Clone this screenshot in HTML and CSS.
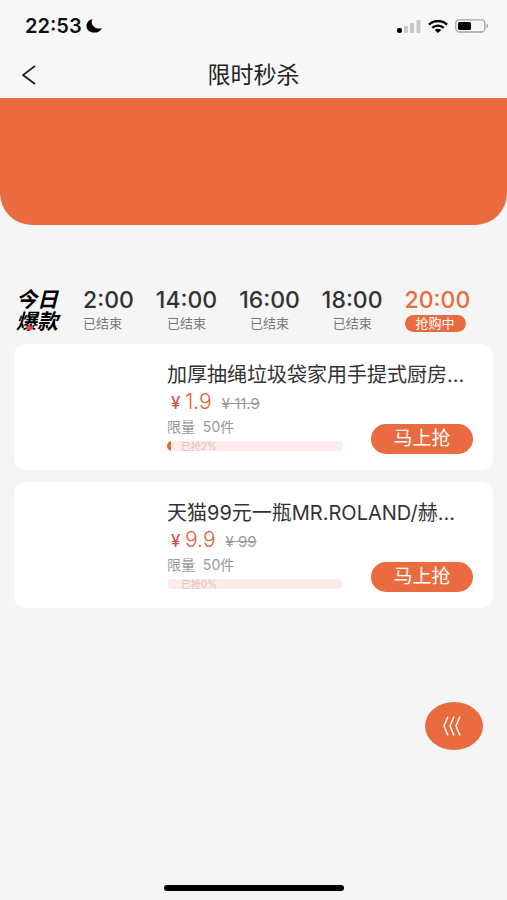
FILE: index.html
```html
<!DOCTYPE html>
<html lang="zh-CN">
<head>
<meta charset="utf-8">
<meta name="viewport" content="width=device-width, initial-scale=1">
<title>限时秒杀</title>
<link rel="stylesheet" href="styles.css">
</head>
<body>
<header class="top">
  <div class="status">
    <span class="clock">22:53</span>
    <svg class="moon" width="17" height="14" viewBox="0 0 17 14"><path d="M6.200.3C2.700 1 .5 3.900.5 7c0 3.900 3.300 6.600 7.500 6.600 3.600 0 6.700-1.700 8-4.700-1.400.6-3 .8-4.500.5C7.300 8.700 4.600 4.800 6.200.3Z"/></svg>
    <div class="signals">
      <svg width="24" height="13" viewBox="0 0 24 13"><rect x="0" y="8" width="5" height="5" rx="2"/><g fill="#c9c9c9"><rect x="7" y="6" width="4" height="7" rx="1"/><rect x="13" y="3" width="4" height="10" rx="1"/><rect x="19.500" y="0" width="4" height="13" rx="1"/></g></svg>
      <svg width="20" height="13" viewBox="0 0 20 13"><g fill="none" stroke="#000" stroke-width="2.400"><path d="M1 4.600C6-.2 14-.2 19 4.600"/><path d="M4.300 7.900c3.200-3.100 8.200-3.100 11.400 0"/></g><path d="M6.700 9.900c1.900-1.700 4.700-1.700 6.600 0L10 13Z"/></svg>
      <svg width="34" height="14" viewBox="0 0 34 14"><rect x=".8" y=".8" width="29" height="12.200" rx="3.500" fill="none" stroke="#a5a5a5" stroke-width="1.300"/><rect x="3" y="3" width="13" height="8" rx="1.500"/><path d="M31.500 4.500c2 .6 2 4.200 0 4.800Z" fill="#a5a5a5"/></svg>
    </div>
  </div>
  <nav class="nav">
    <button class="back" type="button" aria-label="返回"><svg width="14" height="20" viewBox="0 0 14 20"><path d="M13 1 1 10l12 9" fill="none" stroke="#222" stroke-width="1.800"/></svg></button>
    <h1>限时秒杀</h1>
  </nav>
</header>
<main>
  <div class="banner"></div>
  <section class="sessions">
    <div class="hot"><div>今日</div><div>爆款</div><svg class="flame" width="9" height="6" viewBox="0 0 10 7"><path d="M1 2 3 3 5 0l2 3 2-1c1 3-1 5-4 5S0 5 1 2Z" fill="#e94343"/></svg></div>
    <button class="session start" type="button"><b>2:00</b><span>已结束</span></button>
    <button class="session" type="button"><b>14:00</b><span>已结束</span></button>
    <button class="session" type="button"><b>16:00</b><span>已结束</span></button>
    <button class="session" type="button"><b>18:00</b><span>已结束</span></button>
    <button class="session start active" type="button"><b>20:00</b><span>抢购中</span></button>
  </section>
  <section class="list">
    <article class="card">
      <h2>加厚抽绳垃圾袋家用手提式厨房…</h2>
      <p class="price"><i>¥</i><strong>1.9</strong><del>¥ 11.9</del></p>
      <div class="buy">
        <div class="stock">
          <p>限量&nbsp; 50件</p>
          <div class="bar"><div class="fill" style="width:2%"></div><span>已抢2%</span></div>
        </div>
        <button class="grab" type="button">马上抢</button>
      </div>
    </article>
    <article class="card">
      <h2>天猫99元一瓶MR.ROLAND/赫…</h2>
      <p class="price"><i>¥</i><strong>9.9</strong><del>¥ 99</del></p>
      <div class="buy">
        <div class="stock">
          <p>限量&nbsp; 50件</p>
          <div class="bar"><div class="fill" style="width:0%"></div><span>已抢0%</span></div>
        </div>
        <button class="grab" type="button">马上抢</button>
      </div>
    </article>
  </section>
</main>
<button class="float" type="button" aria-label="展开"><svg width="18" height="20" viewBox="0 0 18 20"><path d="M5 .5 1 10l4 9.500M11 .5 7 10l4 9.500M17 .5 13 10l4 9.500" fill="none" stroke="#fff" stroke-width="1.400"/></svg></button>
<div class="home"></div>
</body>
</html>
```

FILE: styles.css
```css
* { box-sizing: border-box; }
body {
  margin: 0;
  min-height: 100vh;
  background: #f5f5f5;
  color: #333;
  font-family: Inter, "Noto Sans CJK SC", sans-serif;
}
h1, h2, p { margin: 0; font-weight: 400; }
button { border: 0; padding: 0; background: none; color: inherit; font: inherit; }
svg { display: block; }

.top { background: #f7f7f7; }
.status { display: flex; align-items: center; height: 52px; padding: 0 18px 0 25px; }
.clock { color: #111; font-size: 20px; font-weight: 600; }
.moon { margin-left: 4px; }
.signals { display: flex; align-items: center; gap: 7px; margin-left: auto; }
.nav { display: grid; grid-template-columns: 60px 1fr 60px; align-items: center; height: 46px; }
.back { padding: 4px 22px; }
.nav h1 { color: #222; font-size: 23px; line-height: 32px; text-align: center; }
.banner { height: 127px; background: #eb6b40; border-radius: 0 0 32px 32px; }

.sessions { display: flex; align-items: flex-start; gap: 22px; padding: 62px 16px 0; }
.hot {
  position: relative;
  width: 45px;
  color: #000;
  font-family: "Noto Sans CJK SC", sans-serif;
  font-size: 21px;
  font-style: italic;
  font-weight: 700;
  line-height: 22px;
  white-space: nowrap;
}
.flame { position: absolute; left: 9px; bottom: 1px; }
.session { display: flex; flex-direction: column; align-items: center; gap: 2px; }
.session.start { align-items: flex-start; }
.session b { font-size: 23px; line-height: 26px; font-weight: 500; }
.session span { color: #777; font-size: 13px; line-height: 17px; }
.session.active b { color: #eb6b40; }
.session.active span { padding: 0 11px; border-radius: 9px; background: #eb6b40; color: #fff; }

.list { display: flex; flex-direction: column; gap: 12px; padding: 12px 14px; }
.card { padding: 17px 20px 16px 153px; border-radius: 12px; background: #fff; }
.card h2 { font-size: 20px; line-height: 28px; white-space: nowrap; }
.price { display: flex; align-items: baseline; height: 26px; padding-left: 4px; line-height: 26px; }
.price i { width: 14px; color: #d9463c; font-size: 17px; font-style: normal; }
.price strong { color: #e5603a; font-size: 21px; font-weight: 300; }
.price del { margin-left: 10px; color: #999; font-size: 15px; }
.buy { display: flex; align-items: flex-end; justify-content: space-between; }
.stock { flex: 0 1 176px; padding-bottom: 3px; }
.stock p { color: #999; font-size: 14px; line-height: 24px; }
.bar { position: relative; height: 10px; margin-top: 2px; overflow: hidden; border-radius: 5px; background: #fdecec; }
.bar span { display: block; padding-left: 14px; color: #eab9b9; font-size: 10px; line-height: 10px; }
.fill { position: absolute; top: 0; left: 0; height: 10px; background: #e4673d; }
.grab { width: 102px; height: 30px; border-radius: 15px; background: #eb6b40; color: #fff; font-size: 19px; line-height: 30px; }

.float {
  position: fixed;
  right: 24px;
  bottom: 150px;
  display: flex;
  align-items: center;
  justify-content: center;
  width: 58px;
  height: 48px;
  padding-right: 4px;
  border-radius: 50%;
  background: #eb6b40;
}
.home { position: fixed; right: 0; bottom: 9px; left: 0; width: 180px; height: 6px; margin: 0 auto; border-radius: 3px; background: #000; }
```
